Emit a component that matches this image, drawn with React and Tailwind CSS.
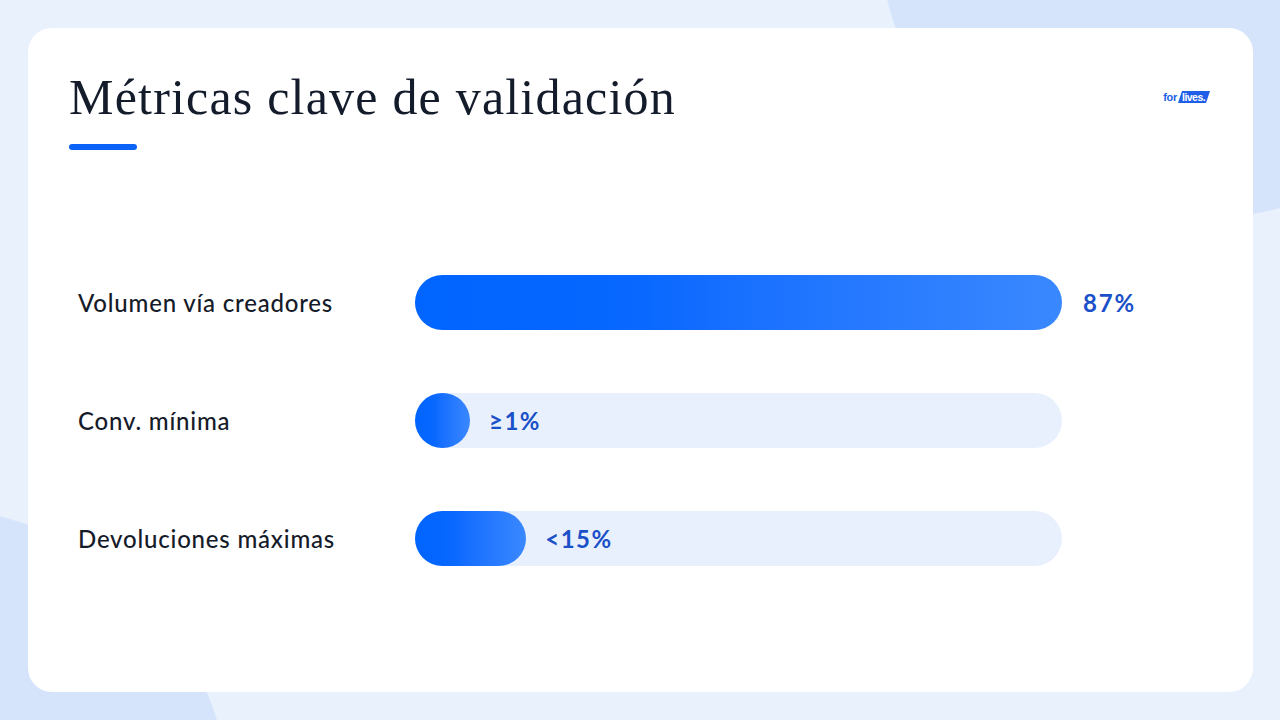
import React from "react";

const rows = [
  { label: "Volumen vía creadores", fill: 100, value: "87%", inside: false },
  { label: "Conv. mínima", fill: 8.5, value: "≥1%", inside: true },
  { label: "Devoluciones máximas", fill: 17.2, value: "<15%", inside: true },
];

function Logo() {
  return (
    <div className="flex items-center">
      <span className="text-[11px] font-bold text-[#1f5fe8] leading-none tracking-tight" style={{ fontFamily: "'Liberation Sans', Arial, sans-serif" }}>
        for
      </span>
      <div className="relative ml-[1px] h-[12px] w-[32px]">
        <svg className="absolute inset-0" width="32" height="12" viewBox="0 0 32 12">
          <polygon points="4,0 32,0 28,12 0,12" fill="#1f5fe8" />
        </svg>
        <span className="absolute left-[4px] top-[0px] text-[10.5px] font-bold text-white leading-[12px] tracking-tighter" style={{ fontFamily: "'Liberation Sans', Arial, sans-serif" }}>
          lives.
        </span>
      </div>
    </div>
  );
}

export default function App() {
  return (
    <div className="relative w-[1280px] h-[720px] overflow-hidden bg-[#e9f1fd]">
      <div className="absolute left-[880px] top-[-340px] w-[620px] h-[560px] rounded-[50%] bg-[#d6e4fb]" />
      <div className="absolute left-[-390px] top-[506px] w-[620px] h-[600px] rounded-[50%] bg-[#d6e4fb]" />
      <div className="relative flex h-full pt-[28px] pb-[28px] pl-[28px] pr-[27px]">
        <div className="flex flex-1 flex-col rounded-[24px] bg-white pt-[40px] pl-[41px] pr-[43px]">
          <div className="flex items-center justify-between">
            <h1
              className="text-[50px] leading-[58px] text-[#141c2c] font-normal tracking-[1.2px]"
              style={{ fontFamily: "'Liberation Serif', 'Times New Roman', serif" }}
            >
              Métricas clave de validación
            </h1>
            <Logo />
          </div>
          <div className="mt-[18px] h-[6px] w-[68px] rounded-full bg-[#0a63f6]" />
          <div className="mt-[125px] flex flex-col gap-[63px] pl-[9px]">
            {rows.map((r) => (
              <div key={r.label} className="flex h-[55px] items-center">
                <div
                  className="w-[337px] text-[24px] font-medium text-[#161b29] tracking-[0.8px]"
                  style={{ fontFamily: "Lato, 'Noto Sans', sans-serif" }}
                >
                  {r.label}
                </div>
                <div className="relative flex h-[55px] w-[647px] items-center rounded-full bg-[#e8f0fd]">
                  <div
                    className="h-[55px] rounded-full bg-gradient-to-r from-[#0064ff] from-0% via-[#0868ff] via-35% to-[#3a88ff] to-100%"
                    style={{ width: `${r.fill}%` }}
                  />
                  {r.inside && (
                    <span
                      className="ml-[19px] text-[24px] font-bold text-[#1a50c8] tracking-[1.5px]"
                      style={{ fontFamily: "Lato, 'Noto Sans', sans-serif" }}
                    >
                      {r.value}
                    </span>
                  )}
                </div>
                {!r.inside && (
                  <span
                    className="ml-[21px] text-[24px] font-bold text-[#1a50c8] tracking-[1.8px]"
                    style={{ fontFamily: "Lato, 'Noto Sans', sans-serif" }}
                  >
                    {r.value}
                  </span>
                )}
              </div>
            ))}
          </div>
        </div>
      </div>
    </div>
  );
}
